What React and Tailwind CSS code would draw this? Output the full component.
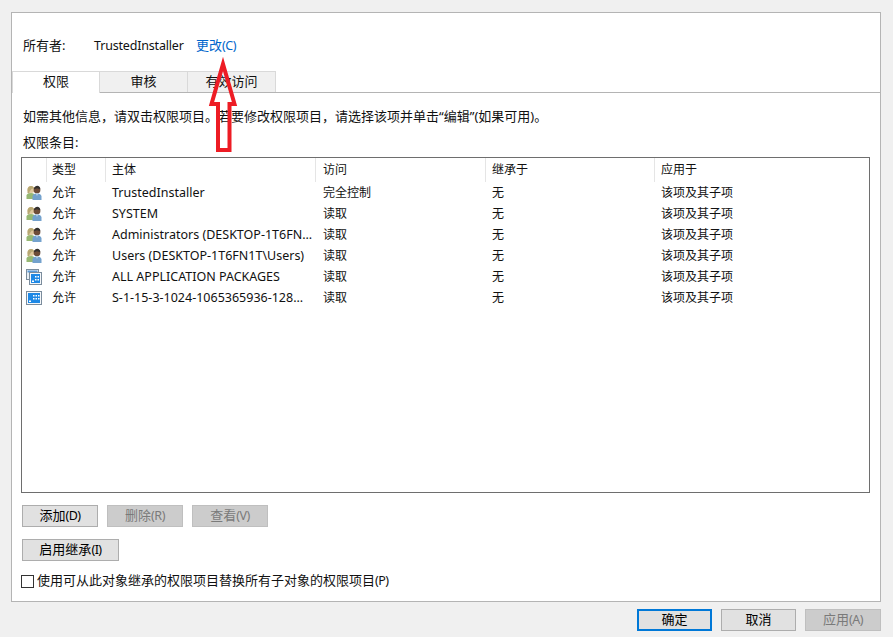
const rows = [
  { icon: 'users', name: 'TrustedInstaller', access: '完全控制' },
  { icon: 'users', name: 'SYSTEM', access: '读取' },
  { icon: 'users', name: 'Administrators (DESKTOP-1T6FN...', access: '读取' },
  { icon: 'users', name: 'Users (DESKTOP-1T6FN1T\\Users)', access: '读取' },
  { icon: 'pkg', name: 'ALL APPLICATION PACKAGES', access: '读取' },
  { icon: 'app', name: 'S-1-15-3-1024-1065365936-128...', access: '读取' },
];

const UsersIcon = () => (
  <svg width="16" height="16" viewBox="0 0 16 16" className="shrink-0">
    <circle cx="5" cy="4.5" r="3.5" fill="#e0c89c" />
    <path d="M1.5 5C1.5 2 3.5 0.8 5.5 1 7.5 1.3 8 3 8 4L6 3.5 3.5 6.5 3.5 9 1.5 8Z" fill="#b8a873" />
    <path d="M0.5 14V10.5C0.5 9 2.5 8 5 8c2.5 0 4 1 4 2.5V14Z" fill="#97b873" />
    <circle cx="11" cy="5" r="3.4" fill="#6e4c38" />
    <path d="M8 4.2C8 2 9.8 0.8 11.3 0.8c1.7 0 3.1 1.4 3 3.4L11 3.2Z" fill="#33302e" />
    <path d="M6.5 15V11.5C6.5 9.5 8.5 8.5 11 8.5s4.5 1 4.5 3V15Z" fill="#74a2cd" />
    <path d="M10 8.6h2l-1 2.4Z" fill="#cfe0ef" />
  </svg>
);

const PkgIcon = () => (
  <svg width="16" height="16" viewBox="0 0 16 16" className="shrink-0">
    <rect x="0.5" y="0.5" width="12" height="10" fill="#e8eef4" stroke="#7b8c9c" />
    <rect x="1.5" y="1.5" width="10" height="2" fill="#5c9ad6" />
    <rect x="3.5" y="3.5" width="12" height="12" fill="#f4f7fa" stroke="#7b8c9c" />
    <rect x="5" y="5" width="9" height="9" fill="#1e88e5" />
    <path d="M9 7h1.5v1.5H9ZM11.5 7H13v1.5h-1.5ZM9 10h1.5v1.5H9ZM11.5 10H13v1.5h-1.5ZM6 11.5h2V13H6Z" fill="#ffffff" />
  </svg>
);

const AppIcon = () => (
  <svg width="16" height="16" viewBox="0 0 16 16" className="shrink-0">
    <rect x="0.5" y="1.5" width="15" height="13" fill="#f4f7fa" stroke="#7b8c9c" />
    <rect x="2" y="3" width="12" height="10" fill="#1e88e5" />
    <path d="M7 5h1.5v1.5H7ZM9.5 5H11v1.5H9.5ZM12 5h1.5v1.5H12ZM7 8h1.5v1.5H7ZM9.5 8H11v1.5H9.5ZM12 8h1.5v1.5H12ZM3 10.5h2V12H3Z" fill="#ffffff" />
  </svg>
);

const Btn = ({ children, disabled, primary, className = '' }) => (
  <div
    className={
      'h-[22px] flex items-center justify-center ' +
      (disabled
        ? 'bg-[#cccccc] border border-[#bfbfbf] text-[#7a7a7a] '
        : primary
          ? 'bg-[#e1e1e1] border-2 border-[#0078d7] text-black '
          : 'bg-[#e1e1e1] border border-[#adadad] text-black ') +
      className
    }
  >
    {children}
  </div>
);

const Key = ({ children }) => <span className="text-[12.5px] tracking-[-0.5px]">{children}</span>;

export default function App() {
  return (
    <div className="w-[893px] h-[637px] bg-[#f0f0f0] pt-[12px] pl-[11px] pr-[12px] text-[13px] text-[#111111] overflow-hidden relative font-['Noto_Sans','Noto_Sans_CJK_SC',sans-serif]">
      {/* main panel */}
      <div className="h-[590px] bg-white border border-[#b4b4b4] flex flex-col">
        {/* owner */}
        <div className="flex items-center h-[18px] mt-[24px] pl-[11px] shrink-0">
          <span className="w-[71px]">所有者:</span>
          <span className="w-[102px] text-[12.5px] tracking-[-0.18px]">TrustedInstaller</span>
          <span className="text-[#0066cc]">更改<Key>(C)</Key></span>
        </div>

        {/* tabs */}
        <div className="flex h-[22px] mt-[16px] border-b border-[#b4b4b4] shrink-0">
          <div className="w-[88px] h-[22px] pb-[1px] bg-white border border-b-0 border-[#d9d9d9] flex items-center justify-center">权限</div>
          <div className="w-[88px] h-[21px] bg-[#f0f0f0] border-t border-r border-[#d9d9d9] flex items-center justify-center">审核</div>
          <div className="w-[88px] h-[21px] bg-[#f0f0f0] border-t border-r border-[#d9d9d9] flex items-center justify-center">有效访问</div>
        </div>

        <div className="flex-1 flex flex-col pl-[9px] pr-[10px]">
          <div className="mt-[15px] ml-[2px] h-[18px] flex items-center whitespace-nowrap">如需其他信息{'\uff0c'}请双击权限项目。若要修改权限项目{'\uff0c'}请选择该项并单击“编辑”(如果可用)。</div>
          <div className="mt-[8px] ml-[2px] h-[18px] flex items-center">权限条目:</div>

          {/* list */}
          <div className="mt-[5px] h-[336px] border border-[#6e6e6e] bg-white shrink-0 text-[12px]">
            <div className="grid grid-cols-[25px_59px_210px_170px_169px_1fr] h-[24px]">
              <div className="border-r border-[#e5e5e5]" />
              <div className="border-r border-[#e5e5e5] pl-[5px] flex items-center">类型</div>
              <div className="border-r border-[#e5e5e5] pl-[6px] flex items-center">主体</div>
              <div className="border-r border-[#e5e5e5] pl-[7px] flex items-center">访问</div>
              <div className="border-r border-[#e5e5e5] pl-[6px] flex items-center">继承于</div>
              <div className="pl-[6px] flex items-center">应用于</div>
            </div>
            {rows.map((row) => (
              <div key={row.name} className="grid grid-cols-[25px_59px_210px_170px_169px_1fr] h-[21px] items-center">
                <div className="pl-[4px] flex items-center">
                  {row.icon === 'users' ? <UsersIcon /> : row.icon === 'pkg' ? <PkgIcon /> : <AppIcon />}
                </div>
                <div className="pl-[5px]">允许</div>
                <div className="pl-[6px] pt-[2px] whitespace-nowrap text-[12.5px]">{row.name}</div>
                <div className="pl-[7px]">{row.access}</div>
                <div className="pl-[6px]">无</div>
                <div className="pl-[6px]">该项及其子项</div>
              </div>
            ))}
          </div>

          {/* action buttons */}
          <div className="flex gap-[9px] mt-[12px] ml-[1px]">
            <Btn className="w-[76px]">添加<Key>(D)</Key></Btn>
            <Btn disabled className="w-[76px]">删除<Key>(R)</Key></Btn>
            <Btn disabled className="w-[76px]">查看<Key>(V)</Key></Btn>
          </div>
          <div className="flex mt-[12px] ml-[1px]">
            <Btn className="w-[97px]">启用继承<Key>(I)</Key></Btn>
          </div>

          <div className="flex items-center mt-[13px] h-[14px]">
            <div className="w-[13px] h-[13px] border border-[#333333] bg-white mr-[3px]" />
            <span className="whitespace-nowrap">使用可从此对象继承的权限项目替换所有子对象的权限项目<Key>(P)</Key></span>
          </div>
        </div>
      </div>

      {/* dialog buttons */}
      <div className="flex justify-end gap-[9px] mt-[7px]">
        <Btn primary className="w-[75px]">确定</Btn>
        <Btn className="w-[75px]">取消</Btn>
        <Btn disabled className="w-[76px]">应用<Key>(A)</Key></Btn>
      </div>

      {/* red arrow annotation */}
      <svg className="absolute left-[205px] top-[52px] pointer-events-none" width="36" height="104" viewBox="0 0 36 104">
        <path d="M18 12 L29.5 52 L24.5 52 L24.5 98 L13 98 L13 52 L6.5 52 Z" fill="none" stroke="#ed1c24" strokeWidth="4" strokeMiterlimit="10" />
      </svg>
    </div>
  );
}
